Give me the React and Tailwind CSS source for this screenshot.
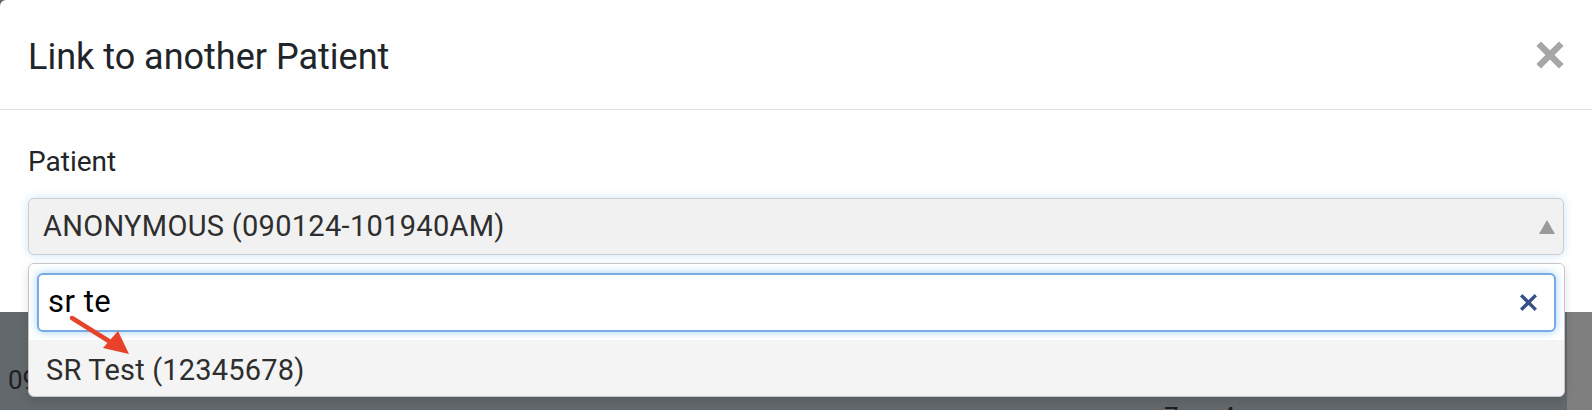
import React from 'react'

const CloseIcon = ({ className, width = 6 }) => (
  <svg viewBox="0 0 28 28" className={className}>
    <path d="M5 5 L23 23 M23 5 L5 23" stroke="currentColor" strokeWidth={width} strokeLinecap="square" fill="none" />
  </svg>
)

const RedArrow = () => (
  <svg className="absolute left-[60px] top-[310px] z-20 w-[80px] h-[50px]" viewBox="0 0 80 50">
    <path d="M12 8 L52 33" stroke="#e8432a" strokeWidth="4.5" strokeLinecap="round" />
    <polygon points="69,44 43,38 58,21" fill="#e8432a" />
  </svg>
)

export default function App() {
  return (
    <div className="relative flex flex-col w-[1592px] h-[410px] overflow-hidden bg-[#62686b] font-['Roboto','Liberation_Sans',sans-serif]">
      {/* page behind the modal */}
      <div className="h-px bg-[#173a57]" />

      {/* Modal */}
      <div className="bg-white rounded-tl-[6px]">
        <div className="flex items-center justify-between h-[110px] pt-[4px] px-[28px] border-b border-[#dee2e6]">
          <h4 className="text-[36px] leading-[52px] text-[#212529]">Link to another Patient</h4>
          <CloseIcon className="w-[28px] h-[28px] text-[#a6a6a6] -mt-[4px]" width={6.5} />
        </div>

        <div className="px-[28px] pt-[31px] pb-[57px]">
          <label className="block text-[28px] leading-[42px] text-[#212529] mb-[15px]">Patient</label>

          <div className="relative">
            <div className="flex items-center justify-between h-[57px] pl-[14px] pr-[8px] rounded-[6px] border border-[#cdcdcd] bg-[#f1f1f1] shadow-[0_0_10px_rgba(102,175,233,0.35)]">
              <span className="text-[29px] tracking-[0.3px] text-[#2e2e2e]">ANONYMOUS (090124-101940AM)</span>
              <svg viewBox="0 0 16 14" className="w-[16px] h-[14px]">
                <polygon points="8,0 16,14 0,14" fill="#9a9a9a" />
              </svg>
            </div>

            {/* Select dropdown */}
            <div className="absolute left-0 top-[calc(100%+8px)] z-10 w-[1537px] h-[134px] rounded-[6px] border border-[#c6c6c6] bg-[#f4f4f4] shadow-[0_4px_10px_rgba(0,0,0,0.12)] overflow-hidden">
              <div className="bg-white px-[8px] pt-[9px] pb-[8px]">
                <div className="flex items-center justify-between h-[59px] pl-[9px] pr-[16px] rounded-[6px] border-2 border-[#78abe1] bg-white shadow-[0_0_9px_rgba(102,175,233,0.6)]">
                  <span className="text-[31px] tracking-[0.5px] text-black">sr te</span>
                  <CloseIcon className="w-[19px] h-[19px] text-[#36508a]" width={5} />
                </div>
              </div>
              <div className="pl-[17px] pt-[9px]">
                <span className="text-[29px] leading-[42px] tracking-[0.2px] text-[#2e2e2e]">SR Test (12345678)</span>
              </div>
            </div>
          </div>
        </div>
      </div>

      {/* backdrop area */}
      <div className="flex flex-1">
        <div className="flex-1 text-[#1d1f20] text-[26px]">
          <div className="pl-[8px] pt-[49px] leading-[39px]">09</div>
          <div className="flex pl-[1164px] gap-[42px] leading-[34px]">
            <span>7</span>
            <span>4</span>
          </div>
        </div>
        <div className="w-[25px] bg-[#7f7f7f]" />
      </div>

      <RedArrow />
    </div>
  )
}
